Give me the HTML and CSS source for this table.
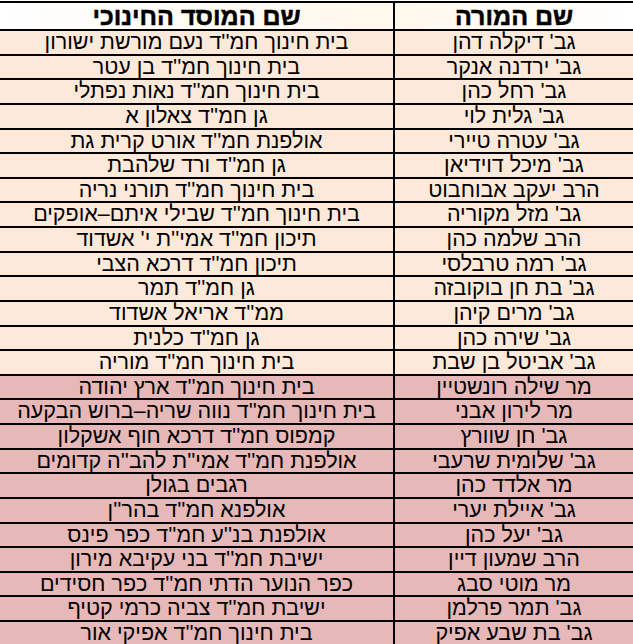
FILE: index.html
```html
<!DOCTYPE html>
<html lang="he" dir="rtl">
<head>
<meta charset="utf-8">
<link rel="stylesheet" href="styles.css">
</head>
<body>
<div class="sheet">
  <div class="cell head teacher">שם המורה</div>
  <div class="cell head school">שם המוסד החינוכי</div>

  <div class="cell teacher">גב' דיקלה דהן</div><div class="cell school">בית חינוך חמ''ד נעם מורשת ישורון</div>
  <div class="cell teacher">גב' ירדנה אנקר</div><div class="cell school">בית חינוך חמ''ד בן עטר</div>
  <div class="cell teacher">גב' רחל כהן</div><div class="cell school">בית חינוך חמ''ד נאות נפתלי</div>
  <div class="cell teacher">גב' גלית לוי</div><div class="cell school">גן חמ''ד צאלון א</div>
  <div class="cell teacher">גב' עטרה טיירי</div><div class="cell school">אולפנת חמ''ד אורט קרית גת</div>
  <div class="cell teacher">גב' מיכל דוידיאן</div><div class="cell school">גן חמ''ד ורד שלהבת</div>
  <div class="cell teacher">הרב יעקב אבוחבוט</div><div class="cell school">בית חינוך חמ''ד תורני נריה</div>
  <div class="cell teacher">גב' מזל מקוריה</div><div class="cell school">בית חינוך חמ''ד שבילי איתם–אופקים</div>
  <div class="cell teacher">הרב שלמה כהן</div><div class="cell school">תיכון חמ''ד אמי''ת י' אשדוד</div>
  <div class="cell teacher">גב' רמה טרבלסי</div><div class="cell school">תיכון חמ''ד דרכא הצבי</div>
  <div class="cell teacher">גב' בת חן בוקובזה</div><div class="cell school">גן חמ''ד תמר</div>
  <div class="cell teacher">גב' מרים קיהן</div><div class="cell school">ממ''ד אריאל אשדוד</div>
  <div class="cell teacher">גב' שירה כהן</div><div class="cell school">גן חמ''ד כלנית</div>
  <div class="cell teacher">גב' אביטל בן שבת</div><div class="cell school">בית חינוך חמ''ד מוריה</div>

  <div class="cell teacher pink">מר שילה רונשטיין</div><div class="cell school pink">בית חינוך חמ''ד ארץ יהודה</div>
  <div class="cell teacher pink">מר לירון אבני</div><div class="cell school pink">בית חינוך חמ''ד נווה שריה–ברוש הבקעה</div>
  <div class="cell teacher pink">גב' חן שוורץ</div><div class="cell school pink">קמפוס חמ''ד דרכא חוף אשקלון</div>
  <div class="cell teacher pink">גב' שלומית שרעבי</div><div class="cell school pink">אולפנת חמ''ד אמי''ת להב''ה קדומים</div>
  <div class="cell teacher pink">מר אלדד כהן</div><div class="cell school pink">רגבים בגולן</div>
  <div class="cell teacher pink">גב' איילת יערי</div><div class="cell school pink">אולפנא חמ''ד בהר''ן</div>
  <div class="cell teacher pink">גב' יעל כהן</div><div class="cell school pink">אולפנת בנ''ע חמ''ד כפר פינס</div>
  <div class="cell teacher pink">הרב שמעון דיין</div><div class="cell school pink">ישיבת חמ''ד בני עקיבא מירון</div>
  <div class="cell teacher pink">מר מוטי סבג</div><div class="cell school pink">כפר הנוער הדתי חמ''ד כפר חסידים</div>
  <div class="cell teacher pink">גב' תמר פרלמן</div><div class="cell school pink">ישיבת חמ''ד צביה כרמי קטיף</div>
  <div class="cell teacher pink">גב' בת שבע אפיק</div><div class="cell school pink">בית חינוך חמ''ד אפיקי אור</div>
</div>
</body>
</html>
```
FILE: styles.css
```css
html, body {
  margin: 0;
  padding: 0;
  background: #ffffff;
  overflow: hidden;
}
.sheet {
  direction: rtl;
  margin-top: 1px;
  width: 633px;
  display: grid;
  grid-template-columns: 240px 393px;
  grid-template-rows: 28px;
  grid-auto-rows: 24.64px;
  border-top: 2px solid #000;
  font-family: "Liberation Sans", Arial, sans-serif;
  font-size: 21.5px;
  color: #000;
}
.cell {
  box-sizing: border-box;
  display: flex;
  align-items: center;
  justify-content: center;
  border-bottom: 2px solid #000;
  background: #fde9d9;
  white-space: nowrap;
  line-height: 1;
  padding-top: 1px;
}
.teacher {
  border-left: 2px solid #000;
}
.pink {
  background: #e6b8b7;
}
.head {
  font-weight: bold;
  font-size: 25px;
  padding-top: 0;
  -webkit-text-stroke: 0.5px #000;
}
.head.teacher {
  background: linear-gradient(to left, #ffffff 0%, #fff8ec 100%);
}
.head.school {
  background: linear-gradient(to left, #fff8ec 0%, #ffffff 100%);
}
```
